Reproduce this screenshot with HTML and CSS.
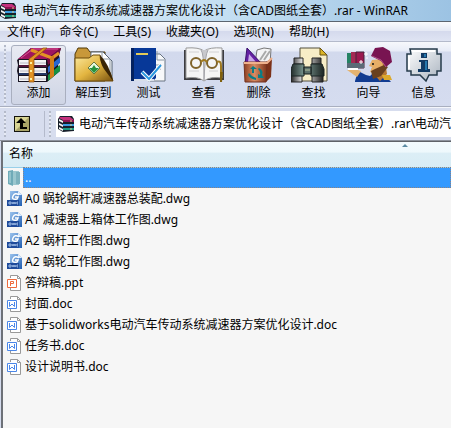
FILE: index.html
```html
<!doctype html>
<html lang="zh-CN">
<head>
    <meta charset="UTF-8">
    <meta name="viewport" content="width=device-width, initial-scale=1.0">
    <title>WinRAR</title>
    <link rel="stylesheet" href="styles.css">
</head>
<body>
<svg class="defs" aria-hidden="true">
    <defs>
        <linearGradient id="gold" x1="0" y1="0" x2="1" y2="1">
            <stop offset="0" stop-color="#fbe9a0"/>
            <stop offset=".5" stop-color="#e3b540"/>
            <stop offset="1" stop-color="#7a5310"/>
        </linearGradient>
        <linearGradient id="copper" x1="0" x2="1">
            <stop offset="0" stop-color="#8d3f22"/>
            <stop offset=".45" stop-color="#d88d64"/>
            <stop offset="1" stop-color="#7c3219"/>
        </linearGradient>
        <linearGradient id="tube" x1="0" x2="1">
            <stop offset="0" stop-color="#222c2a"/>
            <stop offset=".4" stop-color="#7c9892"/>
            <stop offset="1" stop-color="#1c2422"/>
        </linearGradient>
        <linearGradient id="steel" x1="0" x2="1">
            <stop offset="0" stop-color="#222"/>
            <stop offset=".4" stop-color="#fff"/>
            <stop offset="1" stop-color="#222"/>
        </linearGradient>
        <linearGradient id="silver" x1="0" y1="0" x2="1" y2="1">
            <stop offset="0" stop-color="#fff"/>
            <stop offset="1" stop-color="#a9b3bf"/>
        </linearGradient>
        <linearGradient id="cad" x1="0" y1="0" x2="1" y2="1">
            <stop offset="0" stop-color="#9cc4ee"/>
            <stop offset="1" stop-color="#1f5cb0"/>
        </linearGradient>
        <symbol id="books" viewBox="0 0 17 16">
            <path d="M2 0H14L16 3V15L5 16 0 13V3Z" fill="#17202b"/>
            <path d="M2 1H12L16 4H5L1 2Z" fill="#c4307c"/>
            <path d="M5 4H16V6H5Z" fill="#8a1450"/>
            <path d="M5 8H16V10H5Z" fill="#3b9be0"/>
            <path d="M5 12H16V14H5Z" fill="#1c9a82"/>
            <path d="M1 3 5 5V7L1 5ZM1 7 5 9V11L1 9ZM1 11 5 13V15L1 13Z" fill="#f4f4f4"/>
            <path d="M13 4V6M13 8V10M13 12V14" stroke="#d9cf8a"/>
        </symbol>
        <symbol id="dwg" viewBox="0 0 16 16">
            <path d="M3 0H11L15 4V15H3Z" fill="url(#cad)"/>
            <path d="M11 0 15 4H11Z" fill="#dcecff"/>
            <path d="M12 4Q8 1 6 5T10 8L11 6H8" fill="none" stroke="#fff" stroke-width="1.5"/>
            <path d="M0 9H12V15H0Z" fill="#1f4b9b"/>
            <path d="M2 11H4V13H2ZM5 11 6 13 7 11 8 13 9 11M11 11H10V13H11" fill="none" stroke="#b9d3f5" stroke-width=".8"/>
        </symbol>
        <symbol id="doc" viewBox="0 0 16 16">
            <path d="M3.500 3V.5H10.500L13.500 3.500V15.500H3.500V13" fill="#fff" stroke="#999"/>
            <path d="M10.500 .5V3.500H13.500" fill="none" stroke="#999"/>
            <path d="M.5 4.500H9.500V12.500H.5Z" fill="#fff" stroke="#4a86e8"/>
            <path d="M2.500 6V10.500L5 8 7.500 10.500V6" fill="none" stroke="#4a86e8"/>
        </symbol>
        <symbol id="ppt" viewBox="0 0 16 16">
            <path d="M3.500 3V.5H10.500L13.500 3.500V15.500H3.500V13" fill="#fff" stroke="#999"/>
            <path d="M10.500 .5V3.500H13.500" fill="none" stroke="#999"/>
            <path d="M.5 4.500H9.500V12.500H.5Z" fill="#fff" stroke="#ee6a3c"/>
            <path d="M3.500 11V6.500H6.500V8.500H3.500" fill="none" stroke="#ee6a3c"/>
        </symbol>
    </defs>
</svg>

<div class="window">
    <header class="title">
        <svg class="books"><use href="#books"/></svg>
        <h1>电动汽车传动系统减速器方案优化设计（含CAD图纸全套）.rar - WinRAR</h1>
    </header>

    <nav class="menu">
        <button type="button">文件(F)</button>
        <button type="button">命令(C)</button>
        <button type="button">工具(S)</button>
        <button type="button">收藏夹(O)</button>
        <button type="button">选项(N)</button>
        <button type="button">帮助(H)</button>
    </nav>

    <div class="toolbar">
        <span class="grip"></span>
        <button type="button" class="tool active">
            <svg viewBox="0 0 46 36">
                <path d="M1 13 15 1H45L43 8 44 13 42 18 44 24 31 35H2V28L1 24 2 18Z" fill="#191522"/>
                <path d="M2 12 15 1H45L31 12Z" fill="#a0155f"/>
                <path d="M5 11 17 2H42" fill="none" stroke="#d85596"/>
                <path d="M31 12 45 1 43 8 32 18Z" fill="#750c43"/>
                <path d="M32 20 44 10V16L32 26Z" fill="#2867d0"/>
                <path d="M32 28 44 18V24L32 34Z" fill="#159143"/>
                <path d="M3 13H30V18H3ZM3 21H30V26H3ZM3 29H30V34H3Z" fill="#f3f3f5"/>
                <path d="M4 16H30M4 24H30M4 32H30" stroke="#b8b8c4"/>
                <path d="M3 19H31" stroke="#8a1450"/>
                <path d="M3 27H31" stroke="#315ba7"/>
                <path d="M15 3 36 11 43 6" fill="none" stroke="#e29325" stroke-width="3"/>
                <path d="M13 12 27 1H31L18 12V35H13Z" fill="#e29325" stroke="#8c4a08" stroke-width=".7"/>
                <path d="M34 11 38 8V29L34 32Z" fill="#d17d18"/>
                <path d="M15 15V17M15 23V25M15 31V33" stroke="#fff0a0" stroke-width="2"/>
            </svg>
            <span>添加</span>
        </button>
        <button type="button" class="tool">
            <svg viewBox="0 0 46 36">
                <path d="M4 7 7 1H16L19 5H34V34H4Z" fill="#c8983a" stroke="#513807"/>
                <path d="M20 5H32L37 10L41 14V32H19Z" fill="#fff" stroke="#526070"/>
                <path d="M31 4V12H39V30" fill="none" stroke="#8d99a6"/>
                <path d="M4 11H18L22 8H29Q29 16 35 20 40 25 42 34H4Z" fill="url(#gold)" stroke="#6d4a0a"/>
                <path d="M29 8Q38 17 42 34L33 22Q29 16 29 8Z" fill="#3b2505"/>
                <path d="M23 15 29 21 23 27 17 21Z" fill="#e8f8df" stroke="#6b7a40"/>
                <path d="M23 26 18 21H21L23 18 25 21H28Z" fill="#27933d"/>
            </svg>
            <span>解压到</span>
        </button>
        <button type="button" class="tool">
            <svg viewBox="2 0 46 36">
                <path d="M29 7H36L41 12V34H24V7Z" fill="#f7f8fa" stroke="#687482"/>
                <path d="M33 4V13H40M28 18H37M28 22H37" fill="none" stroke="#8995a2"/>
                <path d="M7 1H32V31L29 34H7Z" fill="#073898"/>
                <path d="M7 1H10V34H7Z" fill="#03215f"/>
                <path d="M10 32H30V34H10Z" fill="#d7dde8"/>
                <path d="M12 7H24" stroke="#e3ca58" stroke-width="2"/>
                <path d="M18 25 25 32 37 18" fill="none" stroke="#fff" stroke-width="4"/>
                <path d="M18 25 25 32 37 18" fill="none" stroke="#2997df" stroke-width="2"/>
            </svg>
            <span>测试</span>
        </button>
        <button type="button" class="tool">
            <svg viewBox="0 0 46 36">
                <path d="M3 3H43V33H3Z" fill="#3c3c40"/>
                <path d="M5 1Q18 0 23 4 29 0 41 1V31Q29 29 23 34 17 29 5 31Z" fill="#f5f5f5" stroke="#999"/>
                <path d="M20 3Q23 6 23 33 24 8 27 3" fill="#c8c8cc" stroke="#a5a5aa"/>
                <path d="M8 5H18M28 5H38M8 24H18M28 24H37" stroke="#d2d2d4"/>
                <circle cx="15" cy="16" r="5" fill="none" stroke="#80642b" stroke-width="2"/>
                <circle cx="31" cy="16" r="5" fill="none" stroke="#80642b" stroke-width="2"/>
                <path d="M20 15Q23 11 26 15M36 15Q40 13 40 19V35" fill="none" stroke="#a07a20" stroke-width="2"/>
                <path d="M39 25H42L41 35H39Z" fill="#80610e"/>
            </svg>
            <span>查看</span>
        </button>
        <button type="button" class="tool">
            <svg viewBox="0 0 46 36">
                <path d="M21 3 28 1 35 2 34 17H19Z" fill="#f4f4f5" stroke="#777"/>
                <path d="M24 13 30 4M28 13 34 4" stroke="#aaa" stroke-width="2"/>
                <path d="M11 1 26 17H9Z" fill="#6420a3" stroke="#39106b"/>
                <path d="M13 7 20 15H12Z" fill="#c9a9e8"/>
                <path d="M30 15 36 11 35 30 30 35Z" fill="#7c3219"/>
                <path d="M8 15H31L30 35H9Z" fill="url(#copper)" stroke="#72311e"/>
                <path d="M8 16H31L36 11" fill="none" stroke="#efb18c" stroke-width="2"/>
                <path d="M14 22 17 19 21 22H18V26H16V22ZM23 21Q28 24 26 28L28 31H22V27L24 28Q25 25 22 22ZM13 26 16 29 20 31V33Q14 32 12 28Z" fill="#087e87"/>
            </svg>
            <span>删除</span>
        </button>
        <button type="button" class="tool">
            <svg viewBox="5 0 46 36">
                <path d="M14 1H34L41 8V34H14Z" fill="#f7edc7" stroke="#55503f"/>
                <path d="M34 1V8H41Z" fill="#dcb426" stroke="#6b5511"/>
                <path d="M8 11H17V17H8ZM26 11H35V17H26ZM5 28H16V35H5ZM26 28H37V35H26Z" fill="url(#steel)" stroke="#222"/>
                <path d="M7 17H18V29H5V22ZM25 17H36L38 22V29H25Z" fill="url(#tube)" stroke="#1b2524"/>
                <path d="M18 20H25V27H18Z" fill="#5d716c" stroke="#151d1b"/>
                <path d="M19 23H24" stroke="#b3bf9b"/>
            </svg>
            <span>查找</span>
        </button>
        <button type="button" class="tool">
            <svg viewBox="0 0 46 36">
                <path d="M9 34 12 24 20 28 24 29 29 24 38 27 45 35H9Z" fill="#123c91"/>
                <path d="M28 14H39L41 27 34 34 25 24Z" fill="#b87832"/>
                <path d="M26 13 23 19 26 20 24 25 31 27 37 19 36 12Z" fill="#e6ae67"/>
                <path d="M29 22 25 24 27 32 35 29 42 20 38 18Z" fill="#69401e"/>
                <path d="M25 9 29 1 37 0 44 4 46 15 40 20 35 14Z" fill="#781451"/>
                <path d="M26 9 35 13 40 20" fill="none" stroke="#ae5189"/>
                <path d="M1 6H7V21H1Z" fill="#258263"/>
                <path d="M5 5H10V21H5Z" fill="#a32953"/>
                <path d="M10 5H18V21H10Z" fill="#9a194f" stroke="#46243a"/>
                <path d="M1 16H18V21H1Z" fill="#5a6a77"/>
                <path d="M1 23 9 22 15 24 11 30Z" fill="#e5b36f"/>
                <path d="M2 22H12" stroke="#fff" stroke-width="2"/>
                <path d="M15 13V17M13 15H17M20 5V9M18 7H22M20 11H22" stroke="#fff"/>
                <circle cx="27" cy="17" r="1" fill="#111"/>
                <path d="M36 28H44L46 33H38Z" fill="#dca92c"/>
            </svg>
            <span>向导</span>
        </button>
        <button type="button" class="tool">
            <svg viewBox="0 0 46 36">
                <path d="M9 2H36V7H40V24H36V28H28L25 34 19 28H10V24H6V7H10Z" fill="url(#silver)" stroke="#263b4b" stroke-width="1.500"/>
                <path d="M11 4H34M8 9V22" stroke="#fff" stroke-width="2"/>
                <path d="M20 6H26V11H20ZM18 13H27V22H29V25H17V22H20V15H18Z" fill="#123a64"/>
                <path d="M23 7H25V10H23ZM24 14H26V23H24Z" fill="#2678ad"/>
            </svg>
            <span>信息</span>
        </button>
    </div>

    <div class="path">
        <span class="grip"></span>
        <button type="button" class="up" aria-label="上一级">
            <svg viewBox="0 0 16 16">
                <path d="M0 0H16V16H0Z" fill="#13130d"/>
                <path d="M1 1H15V15H1Z" fill="#d9d594"/>
                <path d="M1 15 15 1V15Z" fill="#a9a468"/>
                <path d="M7 2 12 7H9V11H13V13H6V7H2Z" fill="#000"/>
            </svg>
        </button>
        <span class="grip"></span>
        <div class="address">
            <svg class="books"><use href="#books"/></svg>
            <input type="text" aria-label="地址" value="电动汽车传动系统减速器方案优化设计（含CAD图纸全套）.rar\电动汽车传动系统减速器方案优化设计">
        </div>
    </div>

    <main class="list">
        <table>
            <thead>
            <tr><th colspan="2" scope="col">名称<span class="sort"></span></th></tr>
            </thead>
            <tbody>
            <tr class="selected">
                <td class="icon"><svg viewBox="0 0 16 16">
                    <path d="M1 1 6 0V16L1 14Z" fill="#6faab7"/>
                    <path d="M6 1H12V15H6Z" fill="#9bc7ce"/>
                    <path d="M9 2H13V14H9Z" fill="#7eb2bd"/>
                    <path d="M3 2V13" stroke="#b8dce1"/>
                </svg></td>
                <td>..</td>
            </tr>
            <tr><td class="icon"><svg><use href="#dwg"/></svg></td><td>A0 蜗轮蜗杆减速器总装配.dwg</td></tr>
            <tr><td class="icon"><svg><use href="#dwg"/></svg></td><td>A1 减速器上箱体工作图.dwg</td></tr>
            <tr><td class="icon"><svg><use href="#dwg"/></svg></td><td>A2 蜗杆工作图.dwg</td></tr>
            <tr><td class="icon"><svg><use href="#dwg"/></svg></td><td>A2 蜗轮工作图.dwg</td></tr>
            <tr><td class="icon"><svg><use href="#ppt"/></svg></td><td>答辩稿.ppt</td></tr>
            <tr><td class="icon"><svg><use href="#doc"/></svg></td><td>封面.doc</td></tr>
            <tr><td class="icon"><svg><use href="#doc"/></svg></td><td>基于solidworks电动汽车传动系统减速器方案优化设计.doc</td></tr>
            <tr><td class="icon"><svg><use href="#doc"/></svg></td><td>任务书.doc</td></tr>
            <tr><td class="icon"><svg><use href="#doc"/></svg></td><td>设计说明书.doc</td></tr>
            </tbody>
        </table>
    </main>
</div>
</body>
</html>
```
FILE: styles.css
```css
* {
    margin: 0;
    padding: 0;
    box-sizing: border-box;
}

body, button, input {
    font: 12px/20px "Noto Sans", "Noto Sans CJK SC", sans-serif;
    color: #000;
}

button {
    border: 0;
    background: none;
}

svg {
    display: block;
}

.defs {
    position: absolute;
    width: 0;
    height: 0;
}

.window {
    display: flex;
    flex-direction: column;
    min-height: 100vh;
    overflow: hidden;
    background: #d5dcee;
}

.books {
    flex: none;
    width: 17px;
    height: 16px;
}

.title {
    display: flex;
    align-items: center;
    gap: 5px;
    height: 22px;
    white-space: nowrap;
    background: linear-gradient(to right, #d9e9f6, #c4dff2 50%, #9cc3e3);
    border-bottom: 1px solid #5c6570;
}

.title h1 {
    font-size: 12px;
    font-weight: normal;
}

.menu {
    display: flex;
    gap: 15px;
    height: 20px;
    padding-left: 7px;
    white-space: nowrap;
    background: linear-gradient(#fafbfd, #e6eaf5 45%, #d5daed 50%, #dfe4f3);
    border-bottom: 1px solid #b4bacb;
}

.toolbar {
    display: flex;
    height: 65px;
    padding: 3px 0 1px 4px;
    background: linear-gradient(#f6f8fc, #e8ecf7 9px, #d2d9ed 10px, #d5dcef);
    border-bottom: 1px solid #a9afbf;
}

/* dotted handle at the left of each bar */
.grip {
    flex: none;
    width: 2px;
    margin-right: 5px;
    background: repeating-linear-gradient(#b4bac9 0 2px, #e6eaf4 2px 4px);
}

.tool {
    display: flex;
    flex: none;
    flex-direction: column;
    align-items: center;
    width: 55px;
    padding-top: 1px;
    border: 1px solid transparent;
    border-radius: 3px;
}

.tool svg {
    width: 46px;
    height: 36px;
}

.tool.active {
    border-color: #a9afbf;
    background: linear-gradient(#e8eaf2, #cfd5e5);
}

.path {
    display: flex;
    height: 34px;
    padding: 3px 0 3px 4px;
    background: #d7ddee;
    border-top: 1px solid #f4f6fb;
    border-bottom: 1px solid #8d929c;
}

.up {
    width: 34px;
    margin-right: 4px;
    padding: 0 3px;
    border-right: 1px solid #b4bacb;
}

.up svg {
    width: 16px;
    height: 16px;
}

.address {
    display: flex;
    flex: 1;
    align-items: center;
    gap: 4px;
    min-width: 0;
    padding-left: 2px;
    background: #fff;
}

.address input {
    flex: 1;
    min-width: 0;
    border: 0;
    background: none;
}

.list {
    flex: 1;
    margin-left: 1px;
    background: #f6f6f6;
    border-top: 1px solid #5f6268;
    border-left: 2px solid #6d7178;
}

table {
    width: 100%;
    border-collapse: collapse;
}

th {
    position: relative;
    height: 25px;
    padding-left: 6px;
    font-weight: normal;
    text-align: left;
    background: linear-gradient(#f3fafd, #eef8fc 40%, #dceef6 45%, #d8ecf5);
    border-bottom: 1px solid #98cfe9;
}

.sort {
    position: absolute;
    top: 2px;
    right: 43px;
    border: 3px solid transparent;
    border-top: 0;
    border-bottom-color: #5b8ba3;
}

td {
    height: 21px;
    padding-left: 2px;
    white-space: nowrap;
}

.icon {
    width: 20px;
    padding-left: 4px;
}

.icon svg {
    width: 16px;
    height: 16px;
}

.selected td + td {
    color: #fff;
    background: #3399ff;
    outline: 1px dotted #8c8182;
    outline-offset: -1px;
}
```
